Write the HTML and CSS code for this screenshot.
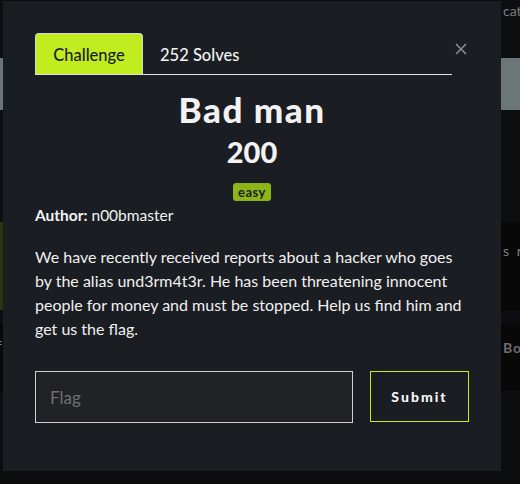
FILE: index.html
```html
<!DOCTYPE html>
<html>
<head>
<meta charset="utf-8">
<link rel="stylesheet" href="styles.css">
</head>
<body>
<div class="page">
  <div class="band b1"><span class="peek right-peek">cat</span></div>
  <div class="band b2"></div>
  <div class="band b3"></div>
  <div class="band b4"><div class="left-olive"></div><span class="peek right-peek mid">s re</span></div>
  <div class="band b5"></div>
  <div class="band b6"><span class="peek left-peek">f</span><span class="peek right-peek bo">Bo</span></div>
  <div class="band b7"></div>
</div>

<div class="modal">
  <div class="head">
    <nav class="tabs">
      <span class="tab active">Challenge</span>
      <span class="tab">252 Solves</span>
    </nav>
    <button class="close" aria-label="Close">
      <svg width="12" height="12" viewBox="0 0 12 12"><path d="M1 1 L11 11 M11 1 L1 11" stroke="#8d9095" stroke-width="1.5"/></svg>
    </button>
  </div>
  <h1 class="title">Bad man</h1>
  <div class="points">200</div>
  <div class="badge-row"><span class="badge">easy</span></div>
  <p class="author"><b>Author:</b> n00bmaster</p>
  <p class="desc">We have recently received reports about a hacker who goes by the alias und3rm4t3r. He has been threatening innocent people for money and must be stopped. Help us find him and get us the flag.</p>
  <form class="flag-form">
    <input class="flag" type="text" placeholder="Flag">
    <button class="submit" type="button">Submit</button>
  </form>
</div>
</body>
</html>
```
FILE: styles.css
```css
* { box-sizing: border-box; }
html, body { margin: 0; padding: 0; }
body {
  width: 520px;
  height: 484px;
  overflow: hidden;
  background: #0b0c0e;
  font-family: Lato, "Open Sans", sans-serif;
  position: relative;
}
.page { display: flex; flex-direction: column; }
.band { position: relative; width: 520px; display: flex; }
.b1 { height: 58px; background: #0d0e10; }
.b2 { height: 52px; background: #6b7777; }
.b3 { height: 112px; background: #0d0e10; }
.b4 { height: 88px; background: #080808; }
.left-olive { width: 10px; background: #2e3412; }
.b5 { height: 15px; background: #0c0d10; }
.b6 { height: 65px; background: #080808; }
.b7 { height: 94px; background: #0c0d0f; }
.peek { position: absolute; color: #7b7d80; font-size: 14px; white-space: nowrap; }
.right-peek { left: 503px; top: 2px; }
.right-peek.mid { top: 20px; letter-spacing: 2px; }
.right-peek.bo { top: 14px; font-weight: 700; letter-spacing: 1px; color: #6a6c6f; }
.left-peek { left: -3px; top: 12px; }

.modal {
  position: absolute;
  left: 3px;
  top: 1px;
  width: 498px;
  height: 470px;
  background: #1a1d22;
  padding: 32px 32px 0 32px;
  color: #f2f2f2;
}
.head { display: flex; align-items: flex-start; }
.tabs {
  display: flex;
  width: 417px;
  border-bottom: 1px solid #e2e2e2;
  height: 42px;
}
.tab {
  font-size: 16.5px;
  height: 41px;
  line-height: 44px;
  padding: 0 17px;
  color: #f2f2f2;
  font-weight: 500;
}
.tab.active {
  background: #c0ec20;
  color: #1a1d22;
  border: 1px solid #d8d8d8;
  border-bottom: none;
  border-radius: 4px 4px 0 0;
  width: 108px;
  line-height: 43px;
  padding: 0;
  text-align: center;
}
.close {
  background: none;
  border: none;
  padding: 0;
  margin: 10px 0 0 3px;
  width: 12px;
  height: 12px;
  display: flex;
}
.title {
  margin: 15px 0 0;
  text-align: center;
  font-size: 35px;
  font-weight: 900;
  letter-spacing: 1.5px;
  line-height: 38px;
}
.points {
  text-align: center;
  font-size: 29px;
  font-weight: 900;
  line-height: 32px;
  margin-top: 8px;
}
.badge-row { display: flex; justify-content: center; margin-top: 15px; }
.badge {
  background: #8db51a;
  color: #1a1d22;
  font-size: 13px;
  font-weight: 700;
  border-radius: 3px;
  padding: 0 5px;
  height: 18px;
  line-height: 18px;
  letter-spacing: 0.5px;
}
.author { margin: 4px 0 0; font-size: 15.5px; line-height: 20px; }
.desc {
  margin: 20px 0 0;
  font-size: 16px;
  line-height: 24px;
  color: #f0f0f0;
}
.flag-form { display: flex; margin-top: 30px; gap: 17px; }
.flag {
  width: 318px;
  height: 52px;
  background: #212225;
  border: 1px solid #cfd2d4;
  padding: 0 14px;
  font-size: 17px;
  font-family: Lato, sans-serif;
  color: #eee;
  outline: none;
}
.flag::placeholder { color: #6c7075; }
.submit {
  width: 99px;
  height: 51px;
  background: transparent;
  border: 1px solid #c0ec20;
  color: #f6f6f6;
  font-family: Lato, sans-serif;
  font-weight: 900;
  font-size: 14px;
  letter-spacing: 2px;
}
```
